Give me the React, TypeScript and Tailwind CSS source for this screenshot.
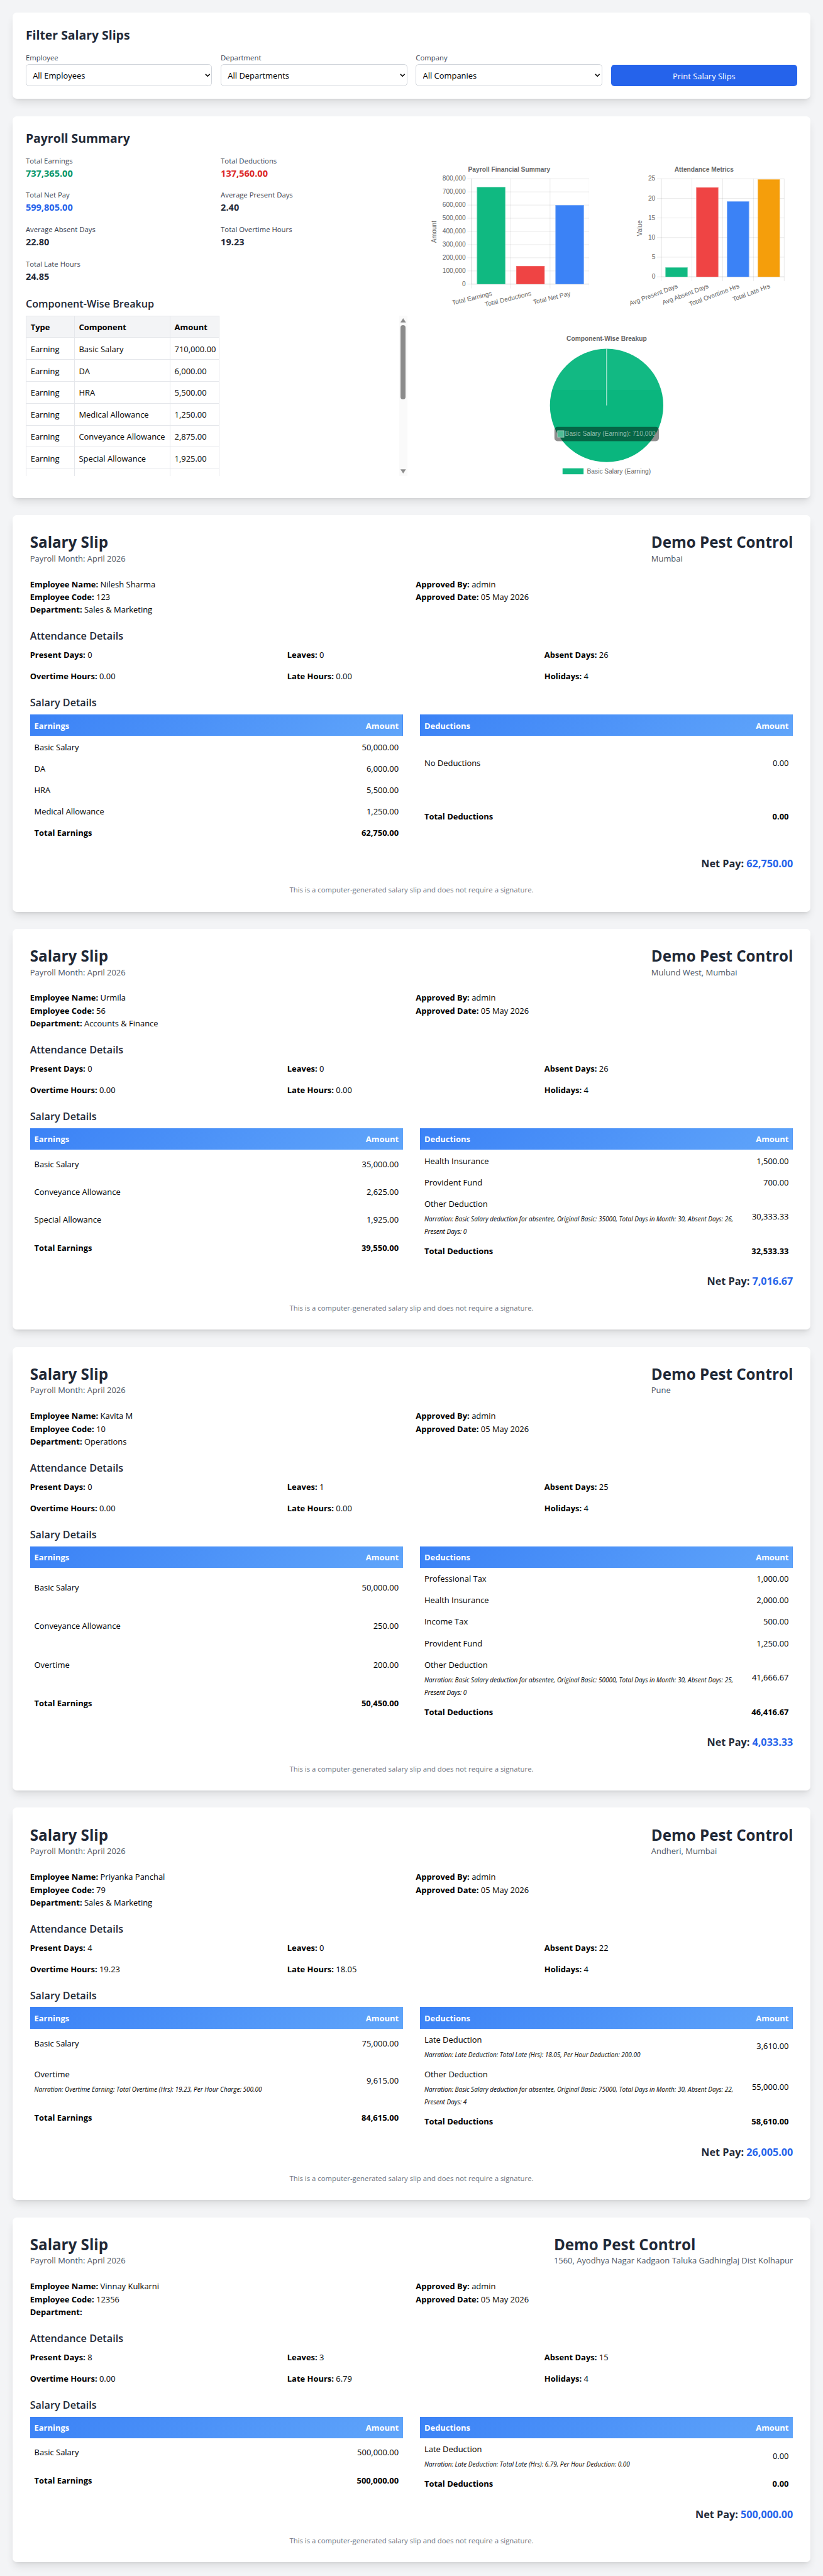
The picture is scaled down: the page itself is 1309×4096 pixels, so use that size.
type Row = {
    name: string
    amount: string
    narration?: string
}

type Slip = {
    address: string
    name: string
    code: string
    department: string
    present: string
    leaves: string
    absent: string
    overtime: string
    late: string
    holidays: string
    earnings: Row[]
    totalEarnings: string
    deductions: Row[]
    totalDeductions: string
    netPay: string
    tableHeight: string
}

const slips: Slip[] = [
    {
        address: "Mumbai",
        name: "Nilesh Sharma",
        code: "123",
        department: "Sales & Marketing",
        present: "0", leaves: "0", absent: "26", overtime: "0.00", late: "0.00", holidays: "4",
        earnings: [
            { name: "Basic Salary", amount: "50,000.00" },
            { name: "DA", amount: "6,000.00" },
            { name: "HRA", amount: "5,500.00" },
            { name: "Medical Allowance", amount: "1,250.00" },
        ],
        totalEarnings: "62,750.00",
        deductions: [{ name: "No Deductions", amount: "0.00" }],
        totalDeductions: "0.00",
        netPay: "62,750.00",
        tableHeight: "h-[240px]",
    },
    {
        address: "Mulund West, Mumbai",
        name: "Urmila",
        code: "56",
        department: "Accounts & Finance",
        present: "0", leaves: "0", absent: "26", overtime: "0.00", late: "0.00", holidays: "4",
        earnings: [
            { name: "Basic Salary", amount: "35,000.00" },
            { name: "Conveyance Allowance", amount: "2,625.00" },
            { name: "Special Allowance", amount: "1,925.00" },
        ],
        totalEarnings: "39,550.00",
        deductions: [
            { name: "Health Insurance", amount: "1,500.00" },
            { name: "Provident Fund", amount: "700.00" },
            {
                name: "Other Deduction",
                amount: "30,333.33",
                narration: "Basic Salary deduction for absentee, Original Basic: 35000, Total Days in Month: 30, Absent Days: 26, Present Days: 0",
            },
        ],
        totalDeductions: "32,533.33",
        netPay: "7,016.67",
        tableHeight: "h-[248px]",
    },
    {
        address: "Pune",
        name: "Kavita M",
        code: "10",
        department: "Operations",
        present: "0", leaves: "1", absent: "25", overtime: "0.00", late: "0.00", holidays: "4",
        earnings: [
            { name: "Basic Salary", amount: "50,000.00" },
            { name: "Conveyance Allowance", amount: "250.00" },
            { name: "Overtime", amount: "200.00" },
        ],
        totalEarnings: "50,450.00",
        deductions: [
            { name: "Professional Tax", amount: "1,000.00" },
            { name: "Health Insurance", amount: "2,000.00" },
            { name: "Income Tax", amount: "500.00" },
            { name: "Provident Fund", amount: "1,250.00" },
            {
                name: "Other Deduction",
                amount: "41,666.67",
                narration: "Basic Salary deduction for absentee, Original Basic: 50000, Total Days in Month: 30, Absent Days: 25, Present Days: 0",
            },
        ],
        totalDeductions: "46,416.67",
        netPay: "4,033.33",
        tableHeight: "h-[328px]",
    },
    {
        address: "Andheri, Mumbai",
        name: "Priyanka Panchal",
        code: "79",
        department: "Sales & Marketing",
        present: "4", leaves: "0", absent: "22", overtime: "19.23", late: "18.05", holidays: "4",
        earnings: [
            { name: "Basic Salary", amount: "75,000.00" },
            {
                name: "Overtime",
                amount: "9,615.00",
                narration: "Overtime Earning: Total Overtime (Hrs): 19.23, Per Hour Charge: 500.00",
            },
        ],
        totalEarnings: "84,615.00",
        deductions: [
            {
                name: "Late Deduction",
                amount: "3,610.00",
                narration: "Late Deduction: Total Late (Hrs): 18.05, Per Hour Deduction: 200.00",
            },
            {
                name: "Other Deduction",
                amount: "55,000.00",
                narration: "Basic Salary deduction for absentee, Original Basic: 75000, Total Days in Month: 30, Absent Days: 22, Present Days: 4",
            },
        ],
        totalDeductions: "58,610.00",
        netPay: "26,005.00",
        tableHeight: "h-[232px]",
    },
    {
        address: "1560, Ayodhya Nagar Kadgaon Taluka Gadhinglaj Dist Kolhapur",
        name: "Vinnay Kulkarni",
        code: "12356",
        department: "",
        present: "8", leaves: "3", absent: "15", overtime: "0.00", late: "6.79", holidays: "4",
        earnings: [{ name: "Basic Salary", amount: "500,000.00" }],
        totalEarnings: "500,000.00",
        deductions: [
            {
                name: "Late Deduction",
                amount: "0.00",
                narration: "Late Deduction: Total Late (Hrs): 6.79, Per Hour Deduction: 0.00",
            },
        ],
        totalDeductions: "0.00",
        netPay: "500,000.00",
        tableHeight: "h-[144px]",
    },
]

const stats = [
    { label: "Total Earnings", value: "737,365.00", color: "text-[#059669]" },
    { label: "Total Deductions", value: "137,560.00", color: "text-[#dc2626]" },
    { label: "Total Net Pay", value: "599,805.00", color: "text-[#2563eb]" },
    { label: "Average Present Days", value: "2.40", color: "text-[#1f2937]" },
    { label: "Average Absent Days", value: "22.80", color: "text-[#1f2937]" },
    { label: "Total Overtime Hours", value: "19.23", color: "text-[#1f2937]" },
    { label: "Total Late Hours", value: "24.85", color: "text-[#1f2937]" },
]

const breakup = [
    ["Earning", "Basic Salary", "710,000.00"],
    ["Earning", "DA", "6,000.00"],
    ["Earning", "HRA", "5,500.00"],
    ["Earning", "Medical Allowance", "1,250.00"],
    ["Earning", "Conveyance Allowance", "2,875.00"],
    ["Earning", "Special Allowance", "1,925.00"],
    ["", "", ""],
]

const FilterSelect = ({ label, value }: { label: string, value: string }) => (
    <div>
        <label className="block text-sm font-medium text-[#374151]">{label}</label>
        <div className="relative mt-[3px]">
            <select className="block w-full h-[40.8px] appearance-none rounded-md border border-[#d1d5db] bg-white pt-0.5 pl-3 pr-8 text-base text-black">
                <option>{value}</option>
            </select>
            <svg className="absolute right-1 top-[17px] w-[10px] h-[7px]" viewBox="0 0 10 7" fill="none" stroke="#000" strokeWidth="1.8">
                <path d="M1 1l4 4 4-4" />
            </svg>
        </div>
    </div>
)

type Bar = { label: string, value: number, fill: string }

type BarChartProps = {
    title: string
    axis: string
    axisX: number
    axisY: number
    left: number
    bottom: number
    max: number
    step: number
    barWidth: number
    angle: number
    labelY: number
    labelDx: number
    bars: Bar[]
}

const BarChart = ({ title, axis, axisX, axisY, left, bottom, max, step, barWidth, angle, labelY, labelDx, bars }: BarChartProps) => {
    const top = 42.8
    const right = 374.4
    const slot = (right - left) / bars.length
    const y = (v: number) => bottom - (v / max) * (bottom - top)
    const ticks = Array.from({ length: max / step + 1 }, (_, i) => i * step)

    return (
        <svg className="w-[300px] h-[280px] [font-size-adjust:none]" viewBox="0 0 375 350" fontFamily="Liberation Sans, Arial, sans-serif" fontSize="15" fill="#666">
            <text x="187.5" y="26.5" textAnchor="middle" fontWeight="bold">{title}</text>
            {ticks.map((t) => (
                <g key={t}>
                    <line x1={left - 9.5} x2={right} y1={y(t)} y2={y(t)} stroke="#000" strokeOpacity="0.1" strokeWidth="1.3" />
                    <text x={left - 13.5} y={y(t) + 4.6} textAnchor="end">{t.toLocaleString("en-US")}</text>
                </g>
            ))}
            {[...bars, null].map((_, i) => (
                <line key={i} x1={left + slot * i} x2={left + slot * i} y1={top} y2={bottom + 10} stroke="#000" strokeOpacity="0.1" strokeWidth="1.3" />
            ))}
            <path d={`M${left} ${top}V${bottom}H${right}`} fill="none" stroke="#000" strokeOpacity="0.1" strokeWidth="1.3" />
            {bars.map((b, i) => {
                const cx = left + slot * (i + 0.5)
                return (
                    <g key={b.label}>
                        <rect x={cx - barWidth / 2} y={y(b.value)} width={barWidth} height={bottom - y(b.value)} fill={b.fill} />
                        <path
                            d={`M${cx - barWidth / 2 + 0.6} ${bottom}V${y(b.value) + 0.6}H${cx + barWidth / 2 - 0.6}V${bottom}`}
                            fill="none" stroke="#fff" strokeOpacity="0.25" strokeWidth="1.3"
                        />
                        <text transform={`translate(${cx + labelDx} ${labelY}) rotate(${-angle})`} textAnchor="end">{b.label}</text>
                    </g>
                )
            })}
            <text transform={`translate(${axisX} ${axisY}) rotate(-90)`} textAnchor="middle">{axis}</text>
        </svg>
    )
}

const PieChart = () => (
    <svg className="w-[300px] h-[280px] [font-size-adjust:none]" viewBox="0 0 375 350" fontFamily="Liberation Sans, Arial, sans-serif" fontSize="15" fill="#666">
        <defs>
            <linearGradient id="pie" gradientUnits="userSpaceOnUse" x1="0" y1="44.8" x2="0" y2="309.2">
                <stop offset="0.365" stopColor="#12b983" />
                <stop offset="0.365" stopColor="#0ab67e" />
            </linearGradient>
        </defs>
        <text x="187.5" y="26.5" textAnchor="middle" fontWeight="bold">Component-Wise Breakup</text>
        <circle cx="187.5" cy="177" r="132.2" fill="url(#pie)" />
        <line x1="187.5" x2="187.5" y1="44.5" y2="177" stroke="#fff" strokeWidth="1.3" />
        <rect x="65.7" y="227" width="243.7" height="33.2" rx="7" fill="#000" fillOpacity="0.44" />
        <rect x="73" y="236" width="15" height="15" fill="#4dbb94" stroke="#a5cdbe" strokeWidth="1.3" />
        <text x="90.3" y="247.8" fill="#8fbcab" textLength="211.5">Basic Salary (Earning): 710,000</text>
        <rect x="84.7" y="323.5" width="49" height="14" fill="#10b981" />
        <text x="141.6" y="335.3">Basic Salary (Earning)</text>
    </svg>
)

const SlipTable = ({ title, rows, total }: { title: string, rows: Row[], total: string }) => (
    <table className="w-full h-full border-collapse">
        <thead>
            <tr className="h-10 bg-[linear-gradient(135deg,#3b82f6,#60a5fa)] text-white">
                <th className="px-2 pt-[9px] pb-[7px] text-left font-bold">{title}</th>
                <th className="px-2 pt-[9px] pb-[7px] text-right font-bold">Amount</th>
            </tr>
        </thead>
        <tbody>
            {rows.map((row) => (
                <tr key={row.name}>
                    <td className="px-2 pt-[9px] pb-[7px]">
                        {row.name}
                        {row.narration && (
                            <div className="mt-1 -mb-1 text-xs leading-6 italic [font-size-adjust:0.523]">{`Narration: ${row.narration}`}</div>
                        )}
                    </td>
                    <td className="px-2 pt-[9px] pb-[7px] text-right">{row.amount}</td>
                </tr>
            ))}
            <tr className="font-bold">
                <td className="px-2 pt-[9px] pb-[7px]">Total {title}</td>
                <td className="px-2 pt-[9px] pb-[7px] text-right">{total}</td>
            </tr>
        </tbody>
    </table>
)

const SalarySlip = ({ slip }: { slip: Slip }) => (
    <div className="rounded-lg bg-white px-8 pt-[33px] pb-[31px] shadow-lg">
        <div className="flex items-start justify-between mb-6">
            <div>
                <h1 className="text-3xl font-bold text-[#1f2937] [font-size-adjust:0.506]">Salary Slip</h1>
                <p className="text-[#4b5563]">Payroll Month: April 2026</p>
            </div>
            <div>
                <h1 className="text-3xl font-bold text-[#1f2937] [font-size-adjust:0.506]">Demo Pest Control</h1>
                <p className="text-[#4b5563]">{slip.address}</p>
            </div>
        </div>

        <div className="grid grid-cols-2 gap-4 mb-6">
            <div>
                <p><strong>Employee Name:</strong> {slip.name}</p>
                <p><strong>Employee Code:</strong> {slip.code}</p>
                <p><strong>Department:</strong> {slip.department}</p>
            </div>
            <div>
                <p><strong>Approved By:</strong> admin</p>
                <p><strong>Approved Date:</strong> 05 May 2026</p>
            </div>
        </div>

        <h2 className="mb-2 text-xl font-semibold text-[#1f2937]">Attendance Details</h2>
        <div className="grid grid-cols-3 gap-4 mb-6">
            <p><strong>Present Days:</strong> {slip.present}</p>
            <p><strong>Leaves:</strong> {slip.leaves}</p>
            <p><strong>Absent Days:</strong> {slip.absent}</p>
            <p><strong>Overtime Hours:</strong> {slip.overtime}</p>
            <p><strong>Late Hours:</strong> {slip.late}</p>
            <p><strong>Holidays:</strong> {slip.holidays}</p>
        </div>

        <h2 className="mb-[7px] text-xl font-semibold text-[#1f2937]">Salary Details</h2>
        <div className={`grid grid-cols-2 gap-8 ${slip.tableHeight}`}>
            <SlipTable title="Earnings" rows={slip.earnings} total={slip.totalEarnings} />
            <SlipTable title="Deductions" rows={slip.deductions} total={slip.totalDeductions} />
        </div>

        <p className="mt-[25px] text-right text-xl font-bold text-[#1f2937]">
            Net Pay: <span className="text-[#2563eb]">{slip.netPay}</span>
        </p>
        <p className="mt-6 text-center text-sm text-[#6b7280]">
            This is a computer-generated salary slip and does not require a signature.
        </p>
    </div>
)

const App = () => {
    return (
        <div className="min-h-screen bg-[#f3f4f6]">
            <div className="[zoom:0.85244] flex flex-col gap-8 p-6 text-base text-black font-['Open_Sans','Noto_Sans',sans-serif] [font-size-adjust:0.508]">

                <div className="rounded-lg bg-white px-6 pt-[25px] pb-6 shadow-lg">
                    <h2 className="mb-4 text-2xl font-bold text-[#1f2937]">Filter Salary Slips</h2>
                    <div className="grid grid-cols-4 gap-4">
                        <FilterSelect label="Employee" value="All Employees" />
                        <FilterSelect label="Department" value="All Departments" />
                        <FilterSelect label="Company" value="All Companies" />
                        <button className="self-end h-10 rounded-md bg-[#2563eb] pt-0.5 text-white">Print Salary Slips</button>
                    </div>
                </div>

                <div className="rounded-lg bg-white px-6 pt-[25px] pb-6 shadow-lg">
                    <h2 className="mb-4 text-2xl font-bold text-[#1f2937]">Payroll Summary</h2>
                    <div className="grid grid-cols-2 gap-4">
                        <div>
                            <div className="grid grid-cols-2 gap-4">
                                {stats.map((s) => (
                                    <div key={s.label}>
                                        <p className="text-sm font-medium text-[#374151]">{s.label}</p>
                                        <p className={`text-lg font-bold ${s.color}`}>{s.value}</p>
                                    </div>
                                ))}
                            </div>
                            <h3 className="mt-6 mb-[7px] text-xl font-semibold text-[#1f2937]">Component-Wise Breakup</h3>
                            <div className="flex h-[300px] justify-between overflow-hidden">
                                <div>
                                    <table className="w-[361px] table-fixed border-collapse [&_td]:border [&_th]:border [&_td]:border-[#e5e7eb] [&_th]:border-[#e5e7eb] [&_td]:px-2 [&_th]:px-2 [&_td]:pt-0.5 [&_th]:pt-0.5">
                                        <thead>
                                            <tr className="h-[40.8px] bg-[#f3f4f6] text-left">
                                                <th className="w-[90px] font-bold">Type</th>
                                                <th className="w-[178.4px] font-bold">Component</th>
                                                <th className="font-bold">Amount</th>
                                            </tr>
                                        </thead>
                                        <tbody>
                                            {breakup.map(([type, component, amount]) => (
                                                <tr key={component} className="h-[40.8px] whitespace-nowrap">
                                                    <td>{type}</td>
                                                    <td>{component}</td>
                                                    <td>{amount}</td>
                                                </tr>
                                            ))}
                                        </tbody>
                                    </table>
                                </div>
                                {/* scrollbar */}
                                <div className="flex w-[15px] flex-col items-center bg-[#fafafa] py-[5px]">
                                    <svg className="w-[10px] h-[8px]" viewBox="0 0 10 8" fill="#8b8b8b"><path d="M5 0.5L9.6 7.5H0.4z" strokeLinejoin="round" stroke="#8b8b8b" strokeWidth="0.6" /></svg>
                                    <div className="mt-[5px] h-[139px] w-[9px] rounded-full bg-[#8b8b8b]" />
                                    <svg className="mt-auto w-[10px] h-[8px]" viewBox="0 0 10 8" fill="#8b8b8b"><path d="M5 7.5L9.6 0.5H0.4z" strokeLinejoin="round" stroke="#8b8b8b" strokeWidth="0.6" /></svg>
                                </div>
                            </div>
                        </div>

                        <div className="-mt-px grid grid-cols-2 gap-4">
                            <div className="flex h-[300px] items-center justify-center">
                                <BarChart
                                    title="Payroll Financial Summary" axis="Amount" axisX={18} axisY={166.5}
                                    left={99.6} bottom={288.6} max={800000} step={100000} barWidth={66.5}
                                    angle={13.5} labelY={315} labelDx={2.8}
                                    bars={[
                                        { label: "Total Earnings", value: 737365, fill: "#10b981" },
                                        { label: "Total Deductions", value: 137560, fill: "#ef4444" },
                                        { label: "Total Net Pay", value: 599805, fill: "#3b82f6" },
                                    ]}
                                />
                            </div>
                            <div className="flex h-[300px] items-center justify-center">
                                <BarChart
                                    title="Attendance Metrics" axis="Value" axisX={43} axisY={158}
                                    left={87.3} bottom={271.5} max={25} step={5} barWidth={51.8}
                                    angle={20.5} labelY={297} labelDx={4.2}
                                    bars={[
                                        { label: "Avg Present Days", value: 2.4, fill: "#10b981" },
                                        { label: "Avg Absent Days", value: 22.8, fill: "#ef4444" },
                                        { label: "Total Overtime Hrs", value: 19.23, fill: "#3b82f6" },
                                        { label: "Total Late Hrs", value: 24.85, fill: "#f59e0b" },
                                    ]}
                                />
                            </div>
                            <div className="col-span-2 flex h-[300px] items-center justify-center">
                                <PieChart />
                            </div>
                        </div>
                    </div>
                </div>

                {slips.map((slip) => (
                    <SalarySlip key={slip.code} slip={slip} />
                ))}
            </div>
        </div>
    )
}

export default App
